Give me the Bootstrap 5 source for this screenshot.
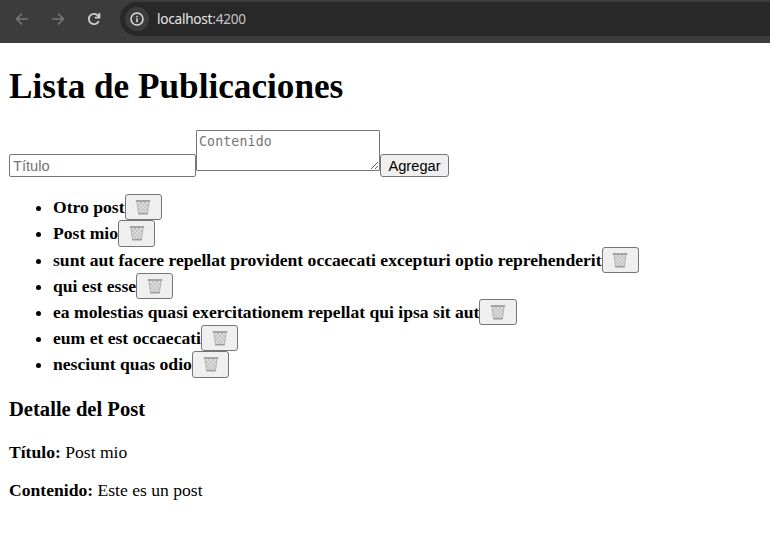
<!DOCTYPE html>
<html lang="es">
<head>
<meta charset="utf-8">
<meta name="viewport" content="width=device-width, initial-scale=1">
<title>Lista de Publicaciones</title>
<link href="https://cdn.jsdelivr.net/npm/bootstrap@5.3.0/dist/css/bootstrap.min.css" rel="stylesheet">
<style>
body{font-family:"Liberation Serif","Times New Roman",serif;font-size:17.6px;line-height:20px;color:#000;background:#fff;overflow:hidden}
.browser-bar{height:43px;background:#3c3c3c;padding:0 0 5px 14px}
.address{height:34px;margin-left:18px;background:#282828;border-radius:17px 0 0 17px;padding-left:5px;font:13.6px/34px "Noto Sans","Open Sans",sans-serif;letter-spacing:-.24px;color:#e8e8e8}
.address .port{color:#c3c6c9}
.site-info{width:24px;height:24px;background:#3c3c3c;margin-right:8px}
.page{padding:0 9px}
.page-title{font-size:35.2px;line-height:40px;font-weight:700;margin:24px 0 23px}
.field{border:1px solid #767676;border-radius:2px;padding:1px 3px;background:#fff;font:14.67px/19px "Liberation Sans",Arial,sans-serif;outline:0}
.field::placeholder{color:#757575;opacity:1}
.field-title{width:187px;height:23px}
.field-body{width:184px;height:41px;font:13.2px/17px "DejaVu Sans Mono",monospace;padding:2px;letter-spacing:.15px;resize:both;border-radius:1px}
.plain-btn{border:1px solid #767676;border-radius:3px;background:#efefef;color:#000;padding:0}
.add-btn{width:69px;height:23px;font:14.67px/20px "Liberation Sans",Arial,sans-serif}
.posts{margin:17.2px 0 0;padding-left:44px}
.posts li{height:26.2px}
.posts .post-line{height:26.2px}
.posts b{line-height:26px}
.trash-btn{width:37.4px;height:26.2px}
.detail-title{font-size:20.6px;line-height:24px;font-weight:700;margin:19.8px 0 21px}
.detail{margin:0 0 18px}
</style>
<script src="https://cdn.jsdelivr.net/npm/bootstrap@5.3.0/dist/js/bootstrap.bundle.min.js"></script>
</head>
<body>
<svg class="d-none" xmlns="http://www.w3.org/2000/svg">
  <symbol id="trash" viewBox="0 0 16 16">
    <path d="M1.8 2.5h12.4L12.6 15H3.4z" fill="#dedede"/>
    <path d="M2 3l1.6 11.5M14 3l-1.6 11.5" stroke="#b0b0b0" fill="none"/>
    <path d="M2.5 5l9 9M5 3l7.5 8M9 3l4.5 4.5M3.5 9.5l4.5 4.5M13.5 5l-9 9M11 3L3.5 11M7 3L2.5 7.5M12.5 9.5L8 14" stroke="#b8b8b8" stroke-width=".8" fill="none"/>
    <path d="M.8 1h14.4v2H.8z" fill="#a4a4a4"/>
    <path d="M3.2 14h9.6v1.5H3.2z" fill="#9c9c9c"/>
  </symbol>
</svg>
<header class="browser-bar d-flex align-items-center">
  <svg width="16" height="16" viewBox="0 0 16 16" fill="none" stroke="#777" stroke-width="1.6"><path d="M14 8H3M8 2.5L2.5 8 8 13.5"/></svg>
  <svg class="ms-3" style="margin-right:20px" width="24" height="16" viewBox="-4 0 24 16" fill="none" stroke="#777" stroke-width="1.6"><path d="M2 8h11M8 2.5L13.5 8 8 13.5"/></svg>
  <svg style="margin-left:-4px" width="16" height="16" viewBox="0 0 16 16" fill="none" stroke="#d0d0d0" stroke-width="1.8"><path d="M12.8 10.1A5.2 5.2 0 1 1 12.5 5.3L13.4 6.5M13.4 2v4.7H8.8"/></svg>
  <div class="address flex-grow-1 d-flex align-items-center">
    <span class="site-info rounded-circle d-flex align-items-center justify-content-center"><svg width="16" height="16" viewBox="0 0 16 16" fill="none" stroke="#dedede" stroke-width="1.5"><circle cx="8" cy="8" r="6"/><path d="M8 7.3v3.9M8 4.7v1.5"/></svg></span>
    <span>localhost<span class="port">:4200</span></span>
  </div>
</header>
<main class="page">
  <h1 class="page-title">Lista de Publicaciones</h1>
  <form class="d-flex align-items-start">
    <input class="field field-title mt-4" placeholder="Título">
    <textarea class="field field-body" placeholder="Contenido"></textarea>
    <button type="button" class="plain-btn add-btn mt-4">Agregar</button>
  </form>
  <ul class="posts">
    <li><div class="post-line d-flex"><b>Otro post</b><button class="plain-btn trash-btn d-flex align-items-center justify-content-center"><svg width="16" height="16"><use href="#trash"/></svg></button></div></li>
    <li><div class="post-line d-flex"><b>Post mio</b><button class="plain-btn trash-btn d-flex align-items-center justify-content-center"><svg width="16" height="16"><use href="#trash"/></svg></button></div></li>
    <li><div class="post-line d-flex"><b>sunt aut facere repellat provident occaecati excepturi optio reprehenderit</b><button class="plain-btn trash-btn d-flex align-items-center justify-content-center"><svg width="16" height="16"><use href="#trash"/></svg></button></div></li>
    <li><div class="post-line d-flex"><b>qui est esse</b><button class="plain-btn trash-btn d-flex align-items-center justify-content-center"><svg width="16" height="16"><use href="#trash"/></svg></button></div></li>
    <li><div class="post-line d-flex"><b>ea molestias quasi exercitationem repellat qui ipsa sit aut</b><button class="plain-btn trash-btn d-flex align-items-center justify-content-center"><svg width="16" height="16"><use href="#trash"/></svg></button></div></li>
    <li><div class="post-line d-flex"><b>eum et est occaecati</b><button class="plain-btn trash-btn d-flex align-items-center justify-content-center"><svg width="16" height="16"><use href="#trash"/></svg></button></div></li>
    <li><div class="post-line d-flex"><b>nesciunt quas odio</b><button class="plain-btn trash-btn d-flex align-items-center justify-content-center"><svg width="16" height="16"><use href="#trash"/></svg></button></div></li>
  </ul>
  <h3 class="detail-title">Detalle del Post</h3>
  <p class="detail"><b>Título:</b> Post mio</p>
  <p class="detail"><b>Contenido:</b> Este es un post</p>
</main>
</body>
</html>
